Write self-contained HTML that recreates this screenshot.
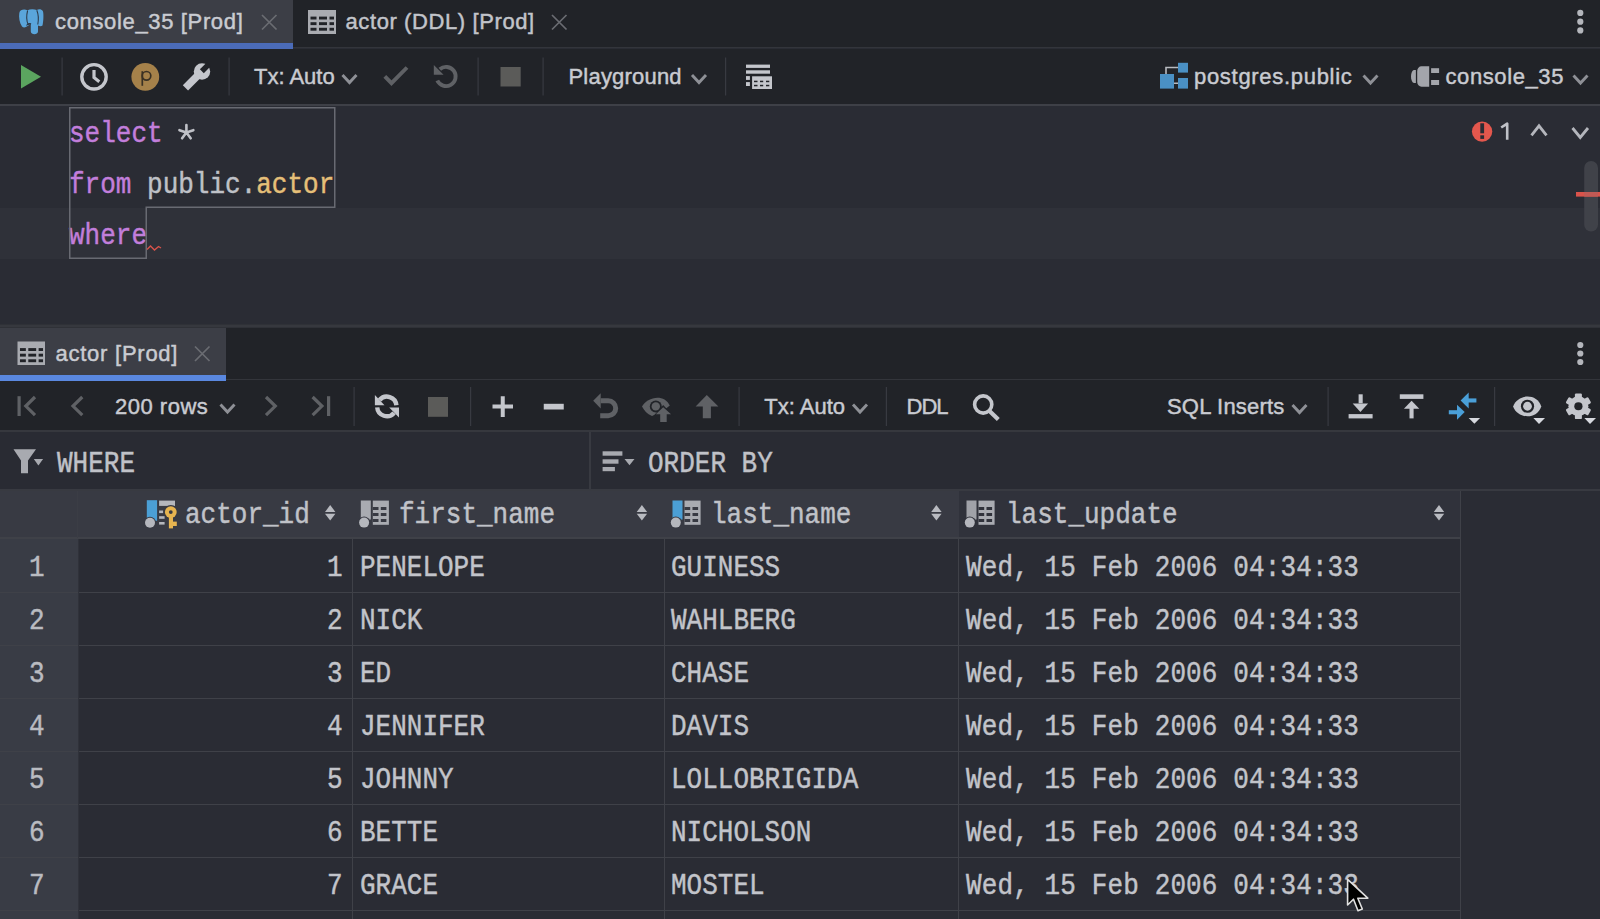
<!DOCTYPE html>
<html><head><meta charset="utf-8">
<style>
html,body{margin:0;padding:0;width:1600px;height:919px;overflow:hidden;background:#2a2c34;}
*{box-sizing:border-box;}
.a{position:absolute;}
.ui{font-family:"Liberation Sans",sans-serif;white-space:pre;-webkit-text-stroke:0.45px currentColor;}
.mono{font-family:"Liberation Mono",monospace;white-space:pre;-webkit-text-stroke:0.4px currentColor;}
.ic{position:absolute;overflow:visible;}
.tall{display:inline-block;transform:scaleY(1.12);transform-origin:0 0;}
</style></head><body>

<div class="a" style="left:0px;top:0px;width:1600px;height:48px;background:#212328;"></div>
<div class="a" style="left:0px;top:47px;width:1600px;height:1px;background:#33353b;"></div>
<div class="a" style="left:0px;top:0px;width:293px;height:43px;background:#3c3e46;"></div>
<div class="a" style="left:0px;top:43px;width:293px;height:6px;background:#4b6bb8;"></div>
<div class="a" style="left:0px;top:49px;width:1600px;height:56px;background:#212328;"></div>
<div class="a" style="left:0px;top:104px;width:1600px;height:2px;background:#3e4047;"></div>
<div class="a" style="left:0px;top:106px;width:1600px;height:218px;background:#2a2c34;"></div>
<div class="a" style="left:0px;top:208px;width:1600px;height:51px;background:#2f3139;"></div>
<div class="a" style="left:0px;top:324px;width:1600px;height:4px;background:#2f3137;"></div>
<div class="a" style="left:0px;top:325px;width:1600px;height:2px;background:#36383e;"></div>
<div class="a" style="left:0px;top:328px;width:1600px;height:53px;background:#212328;"></div>
<div class="a" style="left:0px;top:379px;width:1600px;height:1px;background:#33353b;"></div>
<div class="a" style="left:0px;top:328px;width:226px;height:47px;background:#3c3e46;"></div>
<div class="a" style="left:0px;top:375px;width:226px;height:6px;background:#5a88e0;"></div>
<div class="a" style="left:0px;top:381px;width:1600px;height:50px;background:#212328;"></div>
<div class="a" style="left:0px;top:430px;width:1600px;height:2px;background:#36383e;"></div>
<div class="a" style="left:0px;top:432px;width:1600px;height:57px;background:#292b33;"></div>
<div class="a" style="left:589px;top:432px;width:2px;height:57px;background:#383a41;"></div>
<div class="a" style="left:0px;top:489px;width:1600px;height:2px;background:#383a41;"></div>
<div class="a" style="left:0px;top:491px;width:1461px;height:47px;background:#383a43;"></div>
<div class="a" style="left:959px;top:491px;width:502px;height:47px;background:#30323b;"></div>
<div class="a" style="left:0px;top:537px;width:1461px;height:2px;background:#3f4148;"></div>
<div class="a" style="left:0px;top:539px;width:78px;height:380px;background:#393c45;"></div>
<div class="a" style="left:78px;top:539px;width:1383px;height:380px;background:#2a2c34;"></div>
<div class="a" style="left:0px;top:592px;width:1461px;height:1px;background:#3f4148;"></div>
<div class="a" style="left:0px;top:645px;width:1461px;height:1px;background:#3f4148;"></div>
<div class="a" style="left:0px;top:698px;width:1461px;height:1px;background:#3f4148;"></div>
<div class="a" style="left:0px;top:751px;width:1461px;height:1px;background:#3f4148;"></div>
<div class="a" style="left:0px;top:804px;width:1461px;height:1px;background:#3f4148;"></div>
<div class="a" style="left:0px;top:857px;width:1461px;height:1px;background:#3f4148;"></div>
<div class="a" style="left:0px;top:910px;width:1461px;height:1px;background:#3f4148;"></div>
<div class="a" style="left:0px;top:963px;width:1461px;height:1px;background:#3f4148;"></div>
<div class="a" style="left:352px;top:539px;width:1px;height:380px;background:#3f4148;"></div>
<div class="a" style="left:664px;top:539px;width:1px;height:380px;background:#3f4148;"></div>
<div class="a" style="left:958px;top:539px;width:1px;height:380px;background:#3f4148;"></div>
<div class="a" style="left:1460px;top:539px;width:1px;height:380px;background:#3f4148;"></div>
<div class="a" style="left:78px;top:539px;width:1px;height:380px;background:#30323a;"></div>
<div class="a" style="left:1460px;top:491px;width:1px;height:48px;background:#3f4148;"></div>
<div class="a" style="left:77px;top:491px;width:1px;height:47px;background:#3b3d45;"></div>
<div class="a ui" style="left:55px;top:11.07px;font-size:22px;line-height:22px;color:#c9cbd1;letter-spacing:0.65px;">console_35 [Prod]</div>
<div class="a ui" style="left:345.5px;top:11.07px;font-size:22px;line-height:22px;color:#c2c4ca;letter-spacing:0.6px;">actor (DDL) [Prod]</div>
<div class="a ui" style="left:254px;top:65.77px;font-size:22px;line-height:22px;color:#c9cbd1;letter-spacing:0px;">Tx: Auto</div>
<div class="a ui" style="left:568.5px;top:66.17px;font-size:22px;line-height:22px;color:#c9cbd1;letter-spacing:0.2px;">Playground</div>
<div class="a ui" style="left:1194px;top:65.77px;font-size:22px;line-height:22px;color:#c9cbd1;letter-spacing:0.7px;">postgres.public</div>
<div class="a ui" style="left:1445.5px;top:66.07px;font-size:22px;line-height:22px;color:#c9cbd1;letter-spacing:0.6px;">console_35</div>
<div class="a mono" style="left:69px;top:121.68px;font-size:26px;line-height:26px;color:#bfc1c7;letter-spacing:0px;transform:scaleY(1.12);transform-origin:0 19.92px;"><span style="color:#c27edb">select</span></div>
<div class="a mono" style="left:69px;top:172.68px;font-size:26px;line-height:26px;color:#bfc1c7;letter-spacing:0px;transform:scaleY(1.12);transform-origin:0 19.92px;"><span style="color:#c27edb">from</span> public.<span style="color:#e5bf78">actor</span></div>
<div class="a mono" style="left:69px;top:223.68px;font-size:26px;line-height:26px;color:#bfc1c7;letter-spacing:0px;transform:scaleY(1.12);transform-origin:0 19.92px;"><span style="color:#c27edb">where</span></div>
<div class="a ui" style="left:55.5px;top:343.17px;font-size:22px;line-height:22px;color:#c9cbd1;letter-spacing:0.75px;">actor [Prod]</div>
<div class="a ui" style="left:115px;top:395.77px;font-size:22px;line-height:22px;color:#c9cbd1;letter-spacing:0.5px;">200 rows</div>
<div class="a ui" style="left:764.3px;top:395.57px;font-size:22px;line-height:22px;color:#c9cbd1;letter-spacing:0px;">Tx: Auto</div>
<div class="a ui" style="left:906.5px;top:395.57px;font-size:22px;line-height:22px;color:#c9cbd1;letter-spacing:-1px;">DDL</div>
<div class="a ui" style="left:1167px;top:395.67px;font-size:22px;line-height:22px;color:#c9cbd1;letter-spacing:0.2px;">SQL Inserts</div>
<div class="a mono" style="left:57px;top:451.83px;font-size:26px;line-height:26px;color:#c0c2c8;letter-spacing:0px;transform:scaleY(1.12);transform-origin:0 19.92px;">WHERE</div>
<div class="a mono" style="left:648px;top:451.83px;font-size:26px;line-height:26px;color:#c0c2c8;letter-spacing:0px;transform:scaleY(1.12);transform-origin:0 19.92px;">ORDER BY</div>
<div class="a mono" style="left:185px;top:502.78px;font-size:26px;line-height:26px;color:#c0c2c8;letter-spacing:0px;transform:scaleY(1.12);transform-origin:0 19.92px;">actor_id</div>
<div class="a mono" style="left:399px;top:502.78px;font-size:26px;line-height:26px;color:#c0c2c8;letter-spacing:0px;transform:scaleY(1.12);transform-origin:0 19.92px;">first_name</div>
<div class="a mono" style="left:711px;top:502.78px;font-size:26px;line-height:26px;color:#c0c2c8;letter-spacing:0px;transform:scaleY(1.12);transform-origin:0 19.92px;">last_name</div>
<div class="a mono" style="left:1006px;top:502.78px;font-size:26px;line-height:26px;color:#c0c2c8;letter-spacing:0px;transform:scaleY(1.12);transform-origin:0 19.92px;">last_update</div>
<div class="a mono" style="left:29px;top:555.68px;font-size:26px;line-height:26px;color:#b9bbc1;letter-spacing:0px;transform:scaleY(1.12);transform-origin:0 19.92px;">1</div>
<div class="a mono" style="left:327px;top:555.68px;font-size:26px;line-height:26px;color:#c2c4ca;letter-spacing:0px;transform:scaleY(1.12);transform-origin:0 19.92px;">1</div>
<div class="a mono" style="left:360px;top:555.68px;font-size:26px;line-height:26px;color:#c2c4ca;letter-spacing:0px;transform:scaleY(1.12);transform-origin:0 19.92px;">PENELOPE</div>
<div class="a mono" style="left:671px;top:555.68px;font-size:26px;line-height:26px;color:#c2c4ca;letter-spacing:0px;transform:scaleY(1.12);transform-origin:0 19.92px;">GUINESS</div>
<div class="a mono" style="left:966px;top:555.68px;font-size:26px;line-height:26px;color:#c2c4ca;letter-spacing:0.12px;transform:scaleY(1.12);transform-origin:0 19.92px;">Wed, 15 Feb 2006 04:34:33</div>
<div class="a mono" style="left:29px;top:608.68px;font-size:26px;line-height:26px;color:#b9bbc1;letter-spacing:0px;transform:scaleY(1.12);transform-origin:0 19.92px;">2</div>
<div class="a mono" style="left:327px;top:608.68px;font-size:26px;line-height:26px;color:#c2c4ca;letter-spacing:0px;transform:scaleY(1.12);transform-origin:0 19.92px;">2</div>
<div class="a mono" style="left:360px;top:608.68px;font-size:26px;line-height:26px;color:#c2c4ca;letter-spacing:0px;transform:scaleY(1.12);transform-origin:0 19.92px;">NICK</div>
<div class="a mono" style="left:671px;top:608.68px;font-size:26px;line-height:26px;color:#c2c4ca;letter-spacing:0px;transform:scaleY(1.12);transform-origin:0 19.92px;">WAHLBERG</div>
<div class="a mono" style="left:966px;top:608.68px;font-size:26px;line-height:26px;color:#c2c4ca;letter-spacing:0.12px;transform:scaleY(1.12);transform-origin:0 19.92px;">Wed, 15 Feb 2006 04:34:33</div>
<div class="a mono" style="left:29px;top:661.68px;font-size:26px;line-height:26px;color:#b9bbc1;letter-spacing:0px;transform:scaleY(1.12);transform-origin:0 19.92px;">3</div>
<div class="a mono" style="left:327px;top:661.68px;font-size:26px;line-height:26px;color:#c2c4ca;letter-spacing:0px;transform:scaleY(1.12);transform-origin:0 19.92px;">3</div>
<div class="a mono" style="left:360px;top:661.68px;font-size:26px;line-height:26px;color:#c2c4ca;letter-spacing:0px;transform:scaleY(1.12);transform-origin:0 19.92px;">ED</div>
<div class="a mono" style="left:671px;top:661.68px;font-size:26px;line-height:26px;color:#c2c4ca;letter-spacing:0px;transform:scaleY(1.12);transform-origin:0 19.92px;">CHASE</div>
<div class="a mono" style="left:966px;top:661.68px;font-size:26px;line-height:26px;color:#c2c4ca;letter-spacing:0.12px;transform:scaleY(1.12);transform-origin:0 19.92px;">Wed, 15 Feb 2006 04:34:33</div>
<div class="a mono" style="left:29px;top:714.68px;font-size:26px;line-height:26px;color:#b9bbc1;letter-spacing:0px;transform:scaleY(1.12);transform-origin:0 19.92px;">4</div>
<div class="a mono" style="left:327px;top:714.68px;font-size:26px;line-height:26px;color:#c2c4ca;letter-spacing:0px;transform:scaleY(1.12);transform-origin:0 19.92px;">4</div>
<div class="a mono" style="left:360px;top:714.68px;font-size:26px;line-height:26px;color:#c2c4ca;letter-spacing:0px;transform:scaleY(1.12);transform-origin:0 19.92px;">JENNIFER</div>
<div class="a mono" style="left:671px;top:714.68px;font-size:26px;line-height:26px;color:#c2c4ca;letter-spacing:0px;transform:scaleY(1.12);transform-origin:0 19.92px;">DAVIS</div>
<div class="a mono" style="left:966px;top:714.68px;font-size:26px;line-height:26px;color:#c2c4ca;letter-spacing:0.12px;transform:scaleY(1.12);transform-origin:0 19.92px;">Wed, 15 Feb 2006 04:34:33</div>
<div class="a mono" style="left:29px;top:767.68px;font-size:26px;line-height:26px;color:#b9bbc1;letter-spacing:0px;transform:scaleY(1.12);transform-origin:0 19.92px;">5</div>
<div class="a mono" style="left:327px;top:767.68px;font-size:26px;line-height:26px;color:#c2c4ca;letter-spacing:0px;transform:scaleY(1.12);transform-origin:0 19.92px;">5</div>
<div class="a mono" style="left:360px;top:767.68px;font-size:26px;line-height:26px;color:#c2c4ca;letter-spacing:0px;transform:scaleY(1.12);transform-origin:0 19.92px;">JOHNNY</div>
<div class="a mono" style="left:671px;top:767.68px;font-size:26px;line-height:26px;color:#c2c4ca;letter-spacing:0px;transform:scaleY(1.12);transform-origin:0 19.92px;">LOLLOBRIGIDA</div>
<div class="a mono" style="left:966px;top:767.68px;font-size:26px;line-height:26px;color:#c2c4ca;letter-spacing:0.12px;transform:scaleY(1.12);transform-origin:0 19.92px;">Wed, 15 Feb 2006 04:34:33</div>
<div class="a mono" style="left:29px;top:820.68px;font-size:26px;line-height:26px;color:#b9bbc1;letter-spacing:0px;transform:scaleY(1.12);transform-origin:0 19.92px;">6</div>
<div class="a mono" style="left:327px;top:820.68px;font-size:26px;line-height:26px;color:#c2c4ca;letter-spacing:0px;transform:scaleY(1.12);transform-origin:0 19.92px;">6</div>
<div class="a mono" style="left:360px;top:820.68px;font-size:26px;line-height:26px;color:#c2c4ca;letter-spacing:0px;transform:scaleY(1.12);transform-origin:0 19.92px;">BETTE</div>
<div class="a mono" style="left:671px;top:820.68px;font-size:26px;line-height:26px;color:#c2c4ca;letter-spacing:0px;transform:scaleY(1.12);transform-origin:0 19.92px;">NICHOLSON</div>
<div class="a mono" style="left:966px;top:820.68px;font-size:26px;line-height:26px;color:#c2c4ca;letter-spacing:0.12px;transform:scaleY(1.12);transform-origin:0 19.92px;">Wed, 15 Feb 2006 04:34:33</div>
<div class="a mono" style="left:29px;top:873.68px;font-size:26px;line-height:26px;color:#b9bbc1;letter-spacing:0px;transform:scaleY(1.12);transform-origin:0 19.92px;">7</div>
<div class="a mono" style="left:327px;top:873.68px;font-size:26px;line-height:26px;color:#c2c4ca;letter-spacing:0px;transform:scaleY(1.12);transform-origin:0 19.92px;">7</div>
<div class="a mono" style="left:360px;top:873.68px;font-size:26px;line-height:26px;color:#c2c4ca;letter-spacing:0px;transform:scaleY(1.12);transform-origin:0 19.92px;">GRACE</div>
<div class="a mono" style="left:671px;top:873.68px;font-size:26px;line-height:26px;color:#c2c4ca;letter-spacing:0px;transform:scaleY(1.12);transform-origin:0 19.92px;">MOSTEL</div>
<div class="a mono" style="left:966px;top:873.68px;font-size:26px;line-height:26px;color:#c2c4ca;letter-spacing:0.12px;transform:scaleY(1.12);transform-origin:0 19.92px;">Wed, 15 Feb 2006 04:34:33</div>
<svg class="ic" style="left:0;top:0" width="1600" height="919" viewBox="0 0 1600 919"><g fill="#5aa5db"><path d="M27.5 10.2 C24 9 20 9.5 19.3 13 C18.6 17 19.5 23 22 26.5 C23.5 28 26 27.5 27.5 26 L30.8 24 L30.8 31.5 C31 35 37.8 35 38 31.5 L38 25.5 C39.5 26.5 41.5 26.5 42.5 25.5 C43.6 21 43.8 13 42.8 11 C41.5 9 38.5 9 36.8 10 C34 9 30 9 27.5 10.2 Z"/></g><g fill="none" stroke="#2c3a4a" stroke-width="1.1"><path d="M27.6 10.5 C26.5 15 26.5 21 28.2 24.5 L30.8 24"/><path d="M36.8 10.3 C38.3 14 38.6 20 37.8 24.5"/><path d="M26.5 25.5 C28 23.5 30 23 31 24"/></g><path d="M262 15 l14.5 14.5 M276.5 15 l-14.5 14.5" stroke="#6a6c72" stroke-width="1.7" fill="none"/><path d="M552 15 l14.5 14.5 M566.5 15 l-14.5 14.5" stroke="#6a6c72" stroke-width="1.7" fill="none"/><path d="M195 346.5 l14.5 14.5 M209.5 346.5 l-14.5 14.5" stroke="#6a6c72" stroke-width="1.7" fill="none"/><rect x="308" y="10" width="28" height="24" fill="#a9abb1"/><rect x="310.50" y="16.60" width="6.00" height="2.9" fill="#212328"/><rect x="319.00" y="16.60" width="8.00" height="2.9" fill="#212328"/><rect x="329.50" y="16.60" width="4.50" height="2.9" fill="#212328"/><rect x="310.50" y="22.20" width="6.00" height="2.9" fill="#212328"/><rect x="319.00" y="22.20" width="8.00" height="2.9" fill="#212328"/><rect x="329.50" y="22.20" width="4.50" height="2.9" fill="#212328"/><rect x="310.50" y="27.80" width="6.00" height="2.9" fill="#212328"/><rect x="319.00" y="27.80" width="8.00" height="2.9" fill="#212328"/><rect x="329.50" y="27.80" width="4.50" height="2.9" fill="#212328"/><rect x="17.5" y="341.5" width="27.5" height="23.5" fill="#a9abb1"/><rect x="19.96" y="348.10" width="5.89" height="2.9" fill="#212328"/><rect x="28.30" y="348.10" width="7.86" height="2.9" fill="#212328"/><rect x="38.62" y="348.10" width="4.42" height="2.9" fill="#212328"/><rect x="19.96" y="353.70" width="5.89" height="2.9" fill="#212328"/><rect x="28.30" y="353.70" width="7.86" height="2.9" fill="#212328"/><rect x="38.62" y="353.70" width="4.42" height="2.9" fill="#212328"/><rect x="19.96" y="359.30" width="5.89" height="2.9" fill="#212328"/><rect x="28.30" y="359.30" width="7.86" height="2.9" fill="#212328"/><rect x="38.62" y="359.30" width="4.42" height="2.9" fill="#212328"/><circle cx="1580.3" cy="12.9" r="3.1" fill="#b4b6bc"/><circle cx="1580.3" cy="21.7" r="3.1" fill="#b4b6bc"/><circle cx="1580.3" cy="30.4" r="3.1" fill="#b4b6bc"/><circle cx="1580.3" cy="345" r="3.1" fill="#b4b6bc"/><circle cx="1580.3" cy="353.5" r="3.1" fill="#b4b6bc"/><circle cx="1580.3" cy="362" r="3.1" fill="#b4b6bc"/><rect x="61.5" y="57.5" width="1.2" height="38" fill="#383a41"/><rect x="228.5" y="57.5" width="1.2" height="38" fill="#383a41"/><rect x="477.5" y="57.5" width="1.2" height="38" fill="#383a41"/><rect x="542.5" y="57.5" width="1.2" height="38" fill="#383a41"/><rect x="725.0" y="57.5" width="1.2" height="38" fill="#383a41"/><path d="M21 65 L41 76.8 L21 88.5 Z" fill="#5ba55f"/><circle cx="94" cy="76.8" r="12.2" stroke="#c4c6cc" stroke-width="3.4" fill="none"/><path d="M94 70 V77.5 L99.3 81.8" stroke="#c4c6cc" stroke-width="3.2" fill="none"/><circle cx="145.3" cy="76.8" r="13.9" fill="#a5814a"/><path d="M142.3 71.2 V85.8" stroke="#3a3124" stroke-width="1.7"/><circle cx="146.5" cy="75.8" r="4.3" stroke="#3a3124" stroke-width="1.7" fill="none"/><g fill="#c4c6cc"><circle cx="202" cy="71.5" r="8.2"/><path d="M182.8 85.2 L195.5 72.5 L200.8 77.8 L188.1 90.5 Z"/></g><path d="M199.9 69.3 L207 62.2 L210.9 66.1 L203.8 73.2 Z" fill="#212328"/><path d="M342.5 75 L349.5 82.5 L356.5 75" stroke="#8e9096" stroke-width="2.9" fill="none"/><path d="M692 75 L699.0 82.5 L706 75" stroke="#8e9096" stroke-width="2.9" fill="none"/><path d="M1363.5 75.5 L1370.5 83.0 L1377.5 75.5" stroke="#8e9096" stroke-width="2.9" fill="none"/><path d="M1573.5 75.5 L1580.5 83.0 L1587.5 75.5" stroke="#8e9096" stroke-width="2.9" fill="none"/><path d="M384.8 76.3 L391.5 83.2 L407 67.5" stroke="#5f6165" stroke-width="3.9" fill="none"/><path d="M437.3 80.5 A9.6 9.6 0 1 0 439.8 69.2" stroke="#5f6165" stroke-width="3.9" fill="none"/><path d="M433.8 65 L433.8 74.7 L443.6 74.7 Z" fill="#5f6165"/><rect x="500.5" y="67" width="20.2" height="19.5" fill="#5b5b59"/><g fill="#c4c6cc"><rect x="746" y="64.6" width="24" height="3.3"/><rect x="746" y="70.3" width="24" height="3.4"/><rect x="746" y="76.1" width="3.9" height="3.8"/><rect x="746" y="82.1" width="3.9" height="3.9"/><rect x="752.1" y="76.3" width="19.9" height="12.7"/></g><g fill="#212328"><rect x="754" y="80.7" width="3.5" height="1.5"/><rect x="760" y="80.7" width="3.2" height="1.5"/><rect x="766" y="80.7" width="3.3" height="1.5"/><rect x="754" y="84.8" width="3.5" height="1.5"/><rect x="760" y="84.8" width="3.2" height="1.5"/><rect x="766" y="84.8" width="3.3" height="1.5"/></g><g fill="#4a90c4"><rect x="1178" y="62.8" width="10" height="9.8"/><rect x="1160" y="74" width="14" height="14.6"/><rect x="1178" y="78" width="10" height="10.6"/></g><path d="M1166 74 V67.5 H1178 M1174 83.2 H1178" stroke="#b8bac0" stroke-width="1.6" fill="none"/><g fill="#a3a5ab"><path d="M1415.9 70.1 V82.9 H1414 A3 6.4 0 0 1 1414 70.1 Z"/><path d="M1429.2 66.3 V86.7 H1421.5 A4.3 5 0 0 1 1417.2 81.7 V71.3 A4.3 5 0 0 1 1421.5 66.3 Z"/><rect x="1431.1" y="68.2" width="8" height="4.8"/><rect x="1431.1" y="80" width="8" height="5"/></g><path d="M69.75 107.75 H334.75 V207.25 H146.25 V258.25 H69.75 Z" stroke="#686a72" stroke-width="1.5" fill="none"/><path d="M147 249.5 L150.5 246 L154.5 250 L158.5 246.5 L161 248" stroke="#d9534b" stroke-width="1.4" fill="none"/><circle cx="1482.1" cy="131.6" r="10.2" fill="#e4574d"/><rect x="1480.3" y="123.3" width="3.8" height="10" fill="#2a2c34"/><rect x="1480.3" y="135.3" width="3.8" height="3.6" fill="#2a2c34"/><path d="M1531.5 135.3 L1539.0 125.8 L1546.5 135.3" stroke="#b4b6bc" stroke-width="2.8" fill="none"/><path d="M1572.5 128 L1580.25 137.5 L1588.0 128" stroke="#b4b6bc" stroke-width="2.8" fill="none"/><rect x="1584.2" y="161" width="13.8" height="70.6" rx="6.9" fill="#404249"/><rect x="1576" y="192" width="24" height="4.6" fill="#d9534b"/><rect x="1584.2" y="192" width="13.8" height="4.6" fill="#c15a55"/><rect x="353.5" y="387" width="1.2" height="39" fill="#383a41"/><rect x="470.0" y="387" width="1.2" height="39" fill="#383a41"/><rect x="738.5" y="387" width="1.2" height="39" fill="#383a41"/><rect x="885.8" y="387" width="1.2" height="39" fill="#383a41"/><rect x="1327.5" y="387" width="1.2" height="39" fill="#383a41"/><rect x="1494.0" y="387" width="1.2" height="39" fill="#383a41"/><rect x="17.5" y="396.2" width="3.2" height="19.8" fill="#5f6165"/><path d="M35 397 L25.8 406.1 L35 415.2" stroke="#5f6165" stroke-width="3.2" fill="none"/><path d="M82.3 397 L73 406.1 L82.3 415.2" stroke="#5f6165" stroke-width="3.2" fill="none"/><path d="M220.5 404.5 L227.5 412.0 L234.5 404.5" stroke="#8e9096" stroke-width="2.9" fill="none"/><path d="M266 397 L275.3 406.1 L266 415.2" stroke="#5f6165" stroke-width="3.2" fill="none"/><path d="M312.6 397 L321.9 406.1 L312.6 415.2" stroke="#5f6165" stroke-width="3.2" fill="none"/><rect x="327" y="396.2" width="3.2" height="19.8" fill="#5f6165"/><g fill="none" stroke="#c4c6cc" stroke-width="4.4"><path d="M379.5 400 A9.6 9.6 0 0 1 396.4 405.3"/><path d="M394.1 412.8 A9.6 9.6 0 0 1 377.2 407.4"/></g><path d="M374.9 395.1 L374.9 405.3 L384.5 405.3 Z" fill="#c4c6cc"/><path d="M389.2 407.4 L399 407.4 L399 417.4 Z" fill="#c4c6cc"/><rect x="428" y="397" width="20" height="19.8" fill="#5b5b59"/><path d="M492.5 406.6 H513 M502.75 396.3 V417" stroke="#c4c6cc" stroke-width="4" fill="none"/><rect x="543.75" y="403.8" width="20" height="5.7" fill="#c4c6cc"/><path d="M600.7 400.8 H608.2 A7.5 7.5 0 0 1 608.2 415.8 H600.2" stroke="#5f6165" stroke-width="5" fill="none"/><path d="M593.2 400.7 L600.7 393.2 L600.7 408.6 Z" fill="#5f6165"/><path d="M642 406.4 C647 397 664 393 669.8 405.5 L663 411 L652 416 C647 414 644 410 642 406.4 Z" fill="#5f6165"/><circle cx="655.8" cy="406.4" r="6" fill="#212328"/><circle cx="655.8" cy="406.4" r="4.2" fill="#5f6165"/><path d="M653.5 416 L663.2 405 L673.5 416 Z" fill="#212328"/><path d="M655.8 414.2 L663.2 407.2 L671.1 414.2 H666.7 V422.1 H660.2 V414.2 Z" fill="#5f6165"/><path d="M695.6 406.4 L706.8 395 L718.4 406.4 H710.9 V418.2 H702.8 V406.4 Z" fill="#5f6165"/><path d="M853 404.5 L860.0 412.0 L867 404.5" stroke="#8e9096" stroke-width="2.9" fill="none"/><circle cx="983.2" cy="404.5" r="8.6" stroke="#c4c6cc" stroke-width="3.6" fill="none"/><path d="M989.5 411 L998.3 419.6" stroke="#c4c6cc" stroke-width="4.2" fill="none"/><path d="M1292.5 405 L1299.5 412.5 L1306.5 405" stroke="#8e9096" stroke-width="2.9" fill="none"/><g fill="#c4c6cc"><rect x="1358.6" y="394.3" width="4.1" height="9"/><path d="M1352.7 403.5 H1368.1 L1360.4 412 Z"/><rect x="1348.6" y="414.1" width="24" height="4.3"/></g><g fill="#c4c6cc"><rect x="1399.8" y="394.3" width="23.6" height="4.6"/><path d="M1403.9 408.8 L1411.6 400.7 L1419.3 408.8 Z"/><rect x="1409.5" y="408" width="4.1" height="10.4"/></g><g fill="#4a9fd8"><path d="M1460.6 400.5 L1468.7 392.5 V408.4 Z"/><rect x="1468" y="398.4" width="8.4" height="4.1"/><path d="M1457 404.8 L1464.7 412 L1457 419.7 Z"/><rect x="1448.8" y="410.2" width="8.8" height="4.1"/></g><path d="M1468.7 417.9 H1480.1 L1474.4 423.8 Z" fill="#d6d8de"/><path d="M1513.1 406.4 C1517.5 394 1536.8 392.6 1541.25 406.4 C1536.8 420.2 1517.5 418.8 1513.1 406.4 Z" fill="#c4c6cc"/><circle cx="1527.5" cy="406.25" r="6.6" fill="#212328"/><circle cx="1527.5" cy="406.25" r="4.4" fill="#c4c6cc"/><path d="M1532 417.2 H1546.5 L1539 425 Z" fill="#212328"/><path d="M1533.4 418.1 H1545 L1539 424 Z" fill="#d6d8de"/><g fill="#c4c6cc"><circle cx="1578.4" cy="406.25" r="10"/><rect x="1574.9" y="393.4" width="7" height="8" rx="1.2" transform="rotate(0 1578.4 406.25)"/><rect x="1574.9" y="393.4" width="7" height="8" rx="1.2" transform="rotate(60 1578.4 406.25)"/><rect x="1574.9" y="393.4" width="7" height="8" rx="1.2" transform="rotate(120 1578.4 406.25)"/><rect x="1574.9" y="393.4" width="7" height="8" rx="1.2" transform="rotate(180 1578.4 406.25)"/><rect x="1574.9" y="393.4" width="7" height="8" rx="1.2" transform="rotate(240 1578.4 406.25)"/><rect x="1574.9" y="393.4" width="7" height="8" rx="1.2" transform="rotate(300 1578.4 406.25)"/></g><circle cx="1578.4" cy="406.25" r="4.1" fill="#212328"/><path d="M1583 417.2 H1597.5 L1590 425 Z" fill="#212328"/><path d="M1584.4 418.1 H1596 L1590 424 Z" fill="#d6d8de"/><path d="M13.5 449.3 H36 L28 460.5 V473.3 H21 V460.5 Z" fill="#a8aab0"/><path d="M33.8 458.9 H43.1 L38.4 465.5 Z" fill="#a8aab0"/><g fill="#a8aab0"><rect x="602.6" y="451.3" width="19.8" height="4.4"/><rect x="602.6" y="459.3" width="15.9" height="4.4"/><rect x="602.6" y="467" width="12.3" height="4.2"/><path d="M624.5 459 H634.5 L629.5 465.3 Z"/></g><rect x="360.8" y="500.5" width="10" height="19" fill="#a9abb1"/><circle cx="364.1" cy="522.6" r="6" fill="#383a43"/><circle cx="364.1" cy="522.6" r="5" fill="#b5b7bd"/><rect x="372.8" y="500.6" width="16.1" height="24.2" fill="#a9abb1"/><rect x="372.8" y="507" width="5.7" height="3" fill="#383a43"/><rect x="380.8" y="507" width="5.6" height="3" fill="#383a43"/><rect x="372.8" y="513" width="5.7" height="3" fill="#383a43"/><rect x="380.8" y="513" width="5.6" height="3" fill="#383a43"/><rect x="372.8" y="519" width="5.7" height="3" fill="#383a43"/><rect x="380.8" y="519" width="5.6" height="3" fill="#383a43"/><rect x="672.5" y="500.5" width="10" height="19" fill="#4b9fd5"/><circle cx="675.8" cy="522.6" r="6" fill="#383a43"/><circle cx="675.8" cy="522.6" r="5" fill="#b5b7bd"/><rect x="684.5" y="500.6" width="16.1" height="24.2" fill="#a9abb1"/><rect x="684.5" y="507" width="5.7" height="3" fill="#383a43"/><rect x="692.5" y="507" width="5.6" height="3" fill="#383a43"/><rect x="684.5" y="513" width="5.7" height="3" fill="#383a43"/><rect x="692.5" y="513" width="5.6" height="3" fill="#383a43"/><rect x="684.5" y="519" width="5.7" height="3" fill="#383a43"/><rect x="692.5" y="519" width="5.6" height="3" fill="#383a43"/><rect x="966.5" y="500.5" width="10" height="19" fill="#a0a2a8"/><circle cx="969.8" cy="522.6" r="6" fill="#30323b"/><circle cx="969.8" cy="522.6" r="5" fill="#b5b7bd"/><rect x="978.5" y="500.6" width="16.1" height="24.2" fill="#a9abb1"/><rect x="978.5" y="507" width="5.7" height="3" fill="#30323b"/><rect x="986.5" y="507" width="5.6" height="3" fill="#30323b"/><rect x="978.5" y="513" width="5.7" height="3" fill="#30323b"/><rect x="986.5" y="513" width="5.6" height="3" fill="#30323b"/><rect x="978.5" y="519" width="5.7" height="3" fill="#30323b"/><rect x="986.5" y="519" width="5.6" height="3" fill="#30323b"/><rect x="146.8" y="500.2" width="10.3" height="20.6" fill="#4b9fd5"/><circle cx="150" cy="522.8" r="6" fill="#383a43"/><circle cx="150" cy="522.8" r="5" fill="#b5b7bd"/><g fill="#b5b7bd"><rect x="159.1" y="500.6" width="15.9" height="5.3"/><rect x="159.1" y="510.5" width="4" height="2.6"/><rect x="159.1" y="516.2" width="5.5" height="2.6"/><rect x="159.1" y="522" width="5.5" height="2.6"/></g><circle cx="170.8" cy="512.1" r="7" fill="#383a43"/><g fill="#e6b450"><circle cx="170.8" cy="512.1" r="5.9"/><rect x="168.9" y="516" width="4.1" height="12.4"/><rect x="172.5" y="521.6" width="4.3" height="4.4"/></g><circle cx="170.8" cy="512.1" r="1.9" fill="#383a43"/><g fill="#b8bac0"><path d="M325 512 L330.2 505 L335.4 512 Z"/><path d="M325 513.8 L330.2 520.6 L335.4 513.8 Z"/></g><g fill="#b8bac0"><path d="M636.7 512 L641.9000000000001 505 L647.1 512 Z"/><path d="M636.7 513.8 L641.9000000000001 520.6 L647.1 513.8 Z"/></g><g fill="#b8bac0"><path d="M931.2 512 L936.4000000000001 505 L941.6 512 Z"/><path d="M931.2 513.8 L936.4000000000001 520.6 L941.6 513.8 Z"/></g><g fill="#b8bac0"><path d="M1433.8 512 L1439.0 505 L1444.2 512 Z"/><path d="M1433.8 513.8 L1439.0 520.6 L1444.2 513.8 Z"/></g><path d="M1347.6 879.3 V905 L1353.5 899.2 L1358 910.7 L1362.3 909 L1357.8 898.2 H1367.8 Z" fill="#000" stroke="#e0e0e0" stroke-width="1.6" stroke-linejoin="round"/><path d="M186.4 132.4 L186.40 125.10 M186.4 132.4 L193.34 130.14 M186.4 132.4 L190.69 138.31 M186.4 132.4 L182.11 138.31 M186.4 132.4 L179.46 130.14 " stroke="#bfc1c7" stroke-width="2.6" stroke-linecap="round" fill="none"/><path d="M1501.2 127.5 L1507.2 123.6 V139.7" stroke="#bfc1c7" stroke-width="2.6" fill="none" stroke-linejoin="round"/></svg>
</body></html>
